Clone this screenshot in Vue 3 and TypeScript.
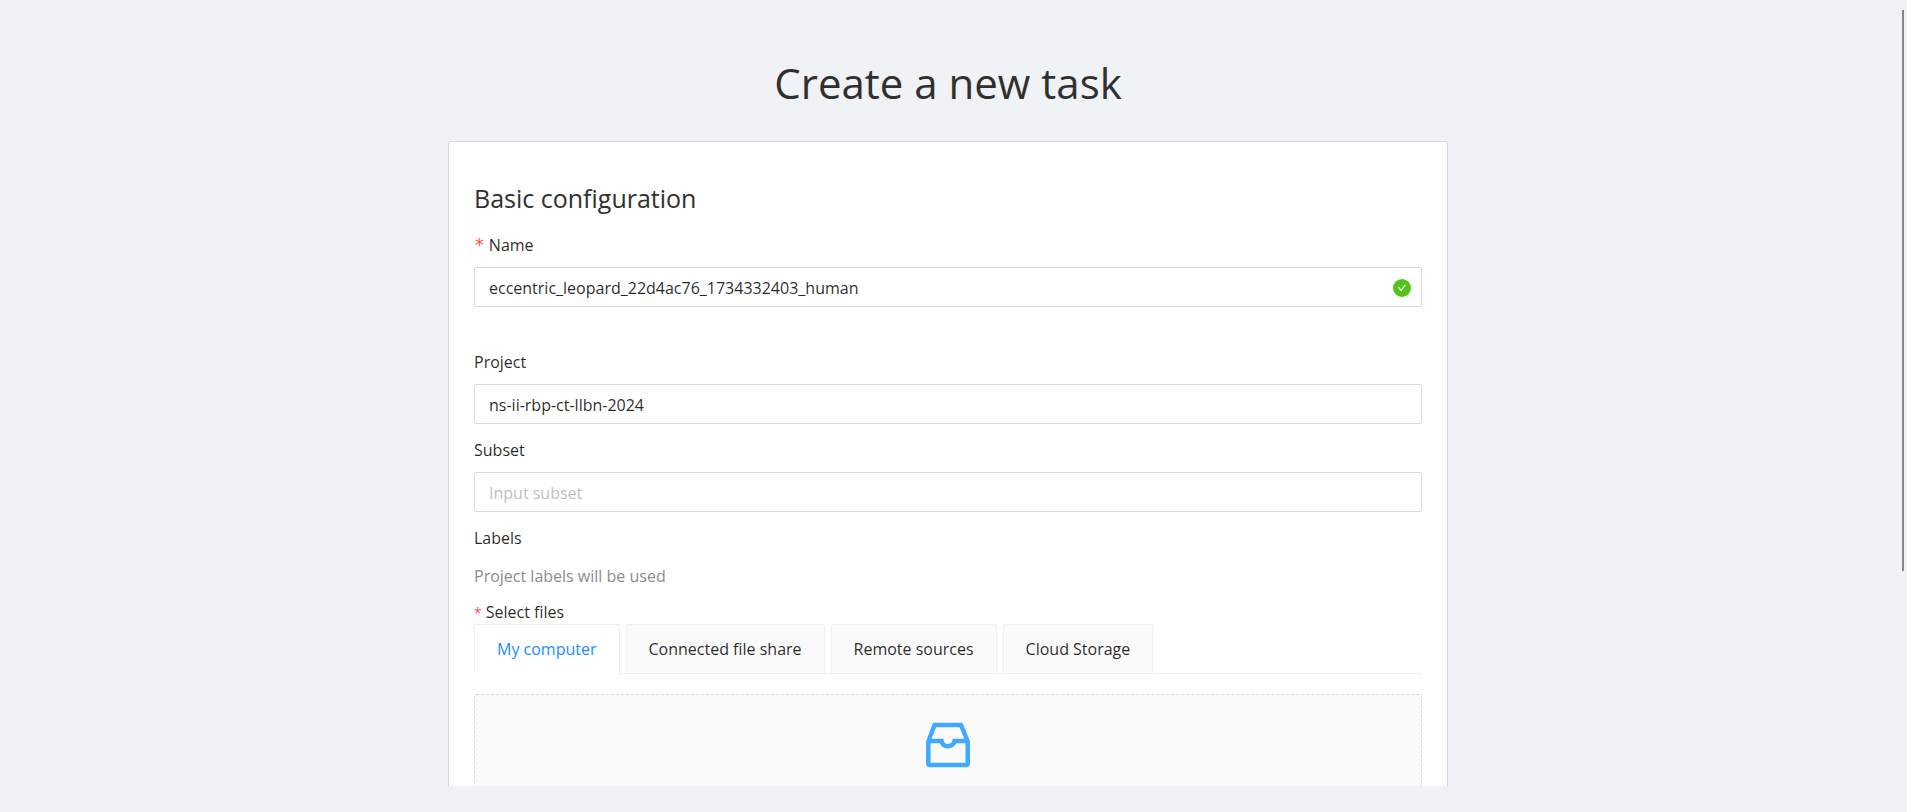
<script setup lang="ts">
import { ref } from 'vue'

const name = ref('eccentric_leopard_22d4ac76_1734332403_human')
const project = ref('ns-ii-rbp-ct-llbn-2024')
const subset = ref('')

const sources: string[] = ['My computer', 'Connected file share', 'Remote sources', 'Cloud Storage']
const active = ref(sources[0])
</script>

<template>
  <div class="page">
    <main class="viewport">
      <div class="content">
        <h1 class="title">Create a new task</h1>
        <form class="card" @submit.prevent>
          <h2 class="section-title">Basic configuration</h2>

          <div class="field field-name">
            <label class="label" for="task-name"><span class="required wide">*</span>Name</label>
            <div class="control">
              <input id="task-name" v-model="name" class="input with-status" type="text" />
              <svg class="status" viewBox="64 64 896 896" aria-hidden="true">
                <circle cx="512" cy="512" r="448" fill="#52c41a" />
                <path
                  fill="#fff"
                  d="M705.500 365.700l-210.600 292a31.800 31.800 0 01-51.700 0L318.500 484.900c-3.800-5.300 0-12.700 6.500-12.700h46.900c10.200 0 19.900 4.900 25.900 13.300l71.200 98.800 157.200-218c6-8.300 15.600-13.300 25.900-13.300H699c6.500 0 10.300 7.400 6.500 12.700z"
                />
              </svg>
            </div>
          </div>

          <div class="field">
            <label class="label" for="task-project">Project</label>
            <input id="task-project" v-model="project" class="input" type="text" />
          </div>

          <div class="field">
            <label class="label" for="task-subset">Subset</label>
            <input id="task-subset" v-model="subset" class="input" type="text" placeholder="Input subset" />
          </div>

          <p class="label labels-title">Labels</p>
          <p class="hint">Project labels will be used</p>

          <p class="files-title"><span class="required small">*</span>Select files</p>
          <div class="tabs" role="tablist">
            <button
              v-for="source in sources"
              :key="source"
              class="tab"
              :class="{ active: source === active }"
              type="button"
              role="tab"
              :aria-selected="source === active"
              @click="active = source"
            >
              {{ source }}
            </button>
          </div>

          <button class="dropzone" type="button" aria-label="Upload files">
            <svg class="inbox" viewBox="0 0 1024 1024" aria-hidden="true">
              <path
                fill="#40a9ff"
                d="M885.200 446.300l-.2-.8-112.200-285.100c-5-16.100-19.900-27.200-36.800-27.200H281.200c-17 0-32.100 11.300-36.900 27.600L139.400 443l-.3.7-.2.8c-1.300 4.900-1.700 9.900-1 14.800-.1 1.600-.2 3.200-.2 4.800V830a60.900 60.900 0 0060.800 60.800h627.200c33.500 0 60.800-27.300 60.900-60.800V464.100c0-1.300 0-2.600-.1-3.700.4-4.900 0-9.600-1.300-14.100zm-295.800-43l-.3 15.700c-.8 44.900-31.800 75.100-77.100 75.100-22.100 0-41.100-7.100-54.800-20.600S436 441.200 435.600 419l-.3-15.700H229.500L309 210h399.200l81.700 193.300H589.400zm-375 76.800h157.300c24.300 57.100 76 90.800 140.400 90.800 33.700 0 65-9.400 90.300-27.200 22.200-15.600 39.500-37.400 50.700-63.600h156.500V814H214.400V480.100z"
              />
            </svg>
          </button>
        </form>
      </div>
      <div class="scroll-thumb"></div>
    </main>
  </div>
</template>

<style>
body {
  margin: 0;
  background: #f0f2f5;
}
</style>

<style scoped>
.page {
  box-sizing: border-box;
  height: 100vh;
  padding-bottom: 26px;
  background: #f0f2f5;
  color: rgba(0, 0, 0, 0.85);
  font-family: "Segoe UI", "Open Sans", "Noto Sans", sans-serif;
  font-size: 16px;
  line-height: 28px;
}

.viewport {
  position: relative;
  box-sizing: border-box;
  height: 100%;
  padding: 54px 11px 0 0;
  overflow: hidden;
}

.content {
  box-sizing: border-box;
  width: 100%;
  max-width: 1000px;
  margin: 0 auto;
}

.title {
  margin: 0 0 29px;
  color: #303030;
  font-size: 42px;
  font-weight: 400;
  line-height: 58px;
  text-align: center;
}

.card {
  padding: 39px 25px 25px;
  border: 1px solid #d9d9d9;
  border-radius: 3px;
  background: #fff;
}

.section-title {
  margin: 0 0 15px;
  color: #303030;
  font-size: 25px;
  font-weight: 400;
  line-height: 35px;
}

.field {
  display: flex;
  flex-direction: column;
  gap: 8px;
  margin-bottom: 12px;
}

.field-name {
  margin-bottom: 41px;
}

.label {
  display: block;
}

.required {
  color: #ff4d4f;
  line-height: 1;
}

.wide {
  margin-right: 4px;
  font-family: "DejaVu Sans Mono", monospace;
  font-size: 18px;
}

.small {
  margin-right: 4px;
  font-size: 14px;
}

.control {
  position: relative;
  display: flex;
}

.input {
  box-sizing: border-box;
  width: 100%;
  height: 40px;
  margin: 0;
  padding: 2px 14px 0;
  border: 1px solid #d9d9d9;
  border-radius: 2px;
  outline: 0;
  background: #fff;
  color: inherit;
  font: inherit;
}

.input::placeholder {
  color: #bfbfbf;
  opacity: 1;
}

.with-status {
  padding-right: 40px;
}

.status {
  position: absolute;
  top: 12px;
  right: 11px;
  width: 18px;
  height: 18px;
}

.labels-title {
  margin: 0 0 10px;
}

.hint {
  margin: 0 0 10px;
  color: #8c8c8c;
}

.files-title {
  margin: 0;
  line-height: 24px;
}

.tabs {
  display: flex;
  gap: 6px;
  margin-bottom: 20px;
  box-shadow: inset 0 -1px #f0f0f0;
}

.tab {
  box-sizing: border-box;
  height: 50px;
  padding: 0 22px;
  border: 1px solid #f0f0f0;
  border-radius: 2px 2px 0 0;
  background: #fafafa;
  color: inherit;
  font: inherit;
  cursor: pointer;
}

.tab.active {
  border-bottom-color: #fff;
  background: #fff;
  color: #1890ff;
}

.dropzone {
  display: flex;
  box-sizing: border-box;
  width: 100%;
  min-height: 220px;
  padding: 20px;
  justify-content: center;
  align-items: flex-start;
  border: 1px dashed #d9d9d9;
  border-radius: 2px;
  background: #fafafa;
  cursor: pointer;
}

.inbox {
  width: 60px;
  height: 60px;
}

.scroll-thumb {
  position: absolute;
  top: 10px;
  right: 3px;
  width: 2px;
  height: calc(100% - 225px);
  background: #858585;
}
</style>
